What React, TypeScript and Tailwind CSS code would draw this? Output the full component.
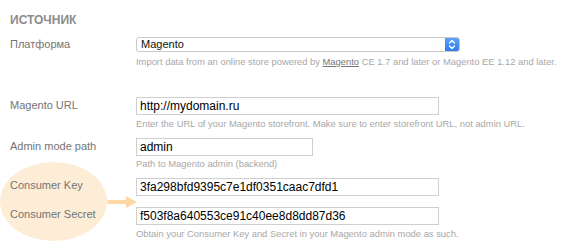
import React from "react";

const Label = ({ children, className = "" }: { children: React.ReactNode; className?: string }) => (
  <div className={`w-[126px] shrink-0 text-[11px] text-[#747474] ${className}`}>{children}</div>
);

const Field = ({ value, width }: { value: string; width: string }) => (
  <div
    className={`${width} h-[18px] border border-[#cfcfcf] bg-white pl-[3px] text-[12px] leading-[16px] text-black whitespace-nowrap overflow-hidden`}
  >
    {value}
  </div>
);

const Help = ({ children, className = "" }: { children: React.ReactNode; className?: string }) => (
  <p className={`text-[9.4px] leading-[11px] text-[#a8a8a8] whitespace-nowrap ${className}`}>{children}</p>
);

export default function App() {
  return (
    <div className="relative w-[576px] h-[247px] bg-white overflow-hidden font-['Liberation_Sans',Arial,sans-serif]">
      {/* highlight annotation */}
      <div className="absolute left-0 top-[162px] w-[107px] h-[79px] rounded-[50%] bg-[#fdedd6]" />
      <svg className="absolute left-[106px] top-[194px]" width="34" height="16" viewBox="0 0 34 16">
        <line x1="3" y1="8" x2="22" y2="8" stroke="#fdd8a4" strokeWidth="4" strokeLinecap="round" />
        <polygon points="20,2 31,8 20,14" fill="#fdd8a4" />
      </svg>

      <div className="relative pl-[10px] pt-[13px]">
        <h2 className="text-[12px] leading-[14px] font-bold text-[#8c8c8c]">ИСТОЧНИК</h2>

        {/* Platform */}
        <div className="flex mt-[10px]">
          <Label className="leading-[15px]">Платформа</Label>
          <div>
            <div className="w-[324px] h-[15px] flex border border-[#c9c9c9] rounded-[3px] bg-white overflow-hidden">
              <div className="flex-1 pl-[4px] text-[11px] leading-[13px] text-[#111]">Magento</div>
              <div className="w-[14px] h-full bg-gradient-to-b from-[#5aa2f8] to-[#2d7bf0] flex items-center justify-center">
                <svg width="8" height="11" viewBox="0 0 8 11" fill="none" stroke="white" strokeWidth="1.4" strokeLinecap="round" strokeLinejoin="round">
                  <polyline points="1.5,4 4,1.5 6.5,4" />
                  <polyline points="1.5,7 4,9.5 6.5,7" />
                </svg>
              </div>
            </div>
            <Help className="mt-[4px]">
              Import data from an online store powered by <span className="underline text-[#777]">Magento</span> CE 1.7 and later or Magento EE 1.12 and later.
            </Help>
          </div>
        </div>

        {/* Magento URL */}
        <div className="flex mt-[30px]">
          <Label className="leading-[17px]">Magento URL</Label>
          <div>
            <Field value="http://mydomain.ru" width="w-[303px]" />
            <Help className="mt-[3px]">
              Enter the URL of your Magento storefront. Make sure to enter storefront URL, not admin URL.
            </Help>
          </div>
        </div>

        {/* Admin path */}
        <div className="flex mt-[9px]">
          <Label className="leading-[17px]">Admin mode path</Label>
          <div>
            <Field value="admin" width="w-[177px]" />
            <Help className="mt-[2px]">Path to Magento admin (backend)</Help>
          </div>
        </div>

        {/* Consumer key */}
        <div className="flex mt-[9px]">
          <Label className="leading-[15px] text-[#7a6f62]">Consumer Key</Label>
          <Field value="3fa298bfd9395c7e1df0351caac7dfd1" width="w-[303px]" />
        </div>

        {/* Consumer secret */}
        <div className="flex mt-[11px]">
          <Label className="leading-[14px] text-[#7a6f62]">Consumer Secret</Label>
          <div>
            <Field value="f503f8a640553ce91c40ee8d8dd87d36" width="w-[303px]" />
            <Help className="mt-[3px]">Obtain your Consumer Key and Secret in your Magento admin mode as such.</Help>
          </div>
        </div>
      </div>
    </div>
  );
}
